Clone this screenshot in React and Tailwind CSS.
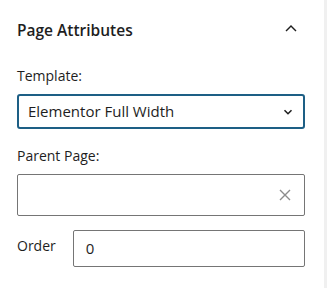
import React from 'react';

export default function App() {
  return (
    <div className="w-[327px] h-[288px] bg-white flex font-['Open_Sans',sans-serif] text-[#1e1e1e]">
      <div className="flex-1 flex flex-col pl-[17px]">
        {/* Panel header */}
        <div className="h-[60px] flex items-center justify-between">
          <div className="text-[15.5px] font-semibold pt-[2px]">Page Attributes</div>
          <svg width="24" height="24" viewBox="0 0 24 24" className="mr-[2px]">
            <path d="M6.5 12.4 12 7l5.5 5.4-1 1L12 9l-4.5 4.4-1-1z" fill="#1e1e1e" />
          </svg>
        </div>

        {/* Template */}
        <div className="text-[14px] leading-[20px] mt-[6px]">Template:</div>
        <div className="mt-[8px] h-[35px] border-2 border-[#1d5f85] rounded-[3px] flex items-center justify-between pl-[9px] pr-[8px]">
          <span className="text-[15px]">Elementor Full Width</span>
          <svg width="14" height="14" viewBox="0 0 24 24">
            <path d="M6 9l6 6 6-6" fill="none" stroke="#1e1e1e" strokeWidth="2.6" />
          </svg>
        </div>

        {/* Parent page */}
        <div className="text-[14px] leading-[20px] mt-[17px]">Parent Page:</div>
        <div className="mt-[8px] h-[42px] border border-[#757575] rounded-[2px] flex items-center justify-end pr-[12px]">
          <svg width="14" height="14" viewBox="0 0 14 14">
            <path d="M2 2l10 10M12 2L2 12" stroke="#8c8c8c" strokeWidth="1.4" />
          </svg>
        </div>

        {/* Order */}
        <div className="mt-[14px] flex items-center gap-[17px]">
          <span className="text-[14px] -mt-[7px]">Order</span>
          <div className="flex-1 h-[37px] border border-[#757575] rounded-[2px] flex items-center pl-[12px] text-[15px]">0</div>
        </div>
      </div>
      <div className="w-[19px]" />
      <div className="w-[3px] bg-[#f0f0f0]" />
    </div>
  );
}
